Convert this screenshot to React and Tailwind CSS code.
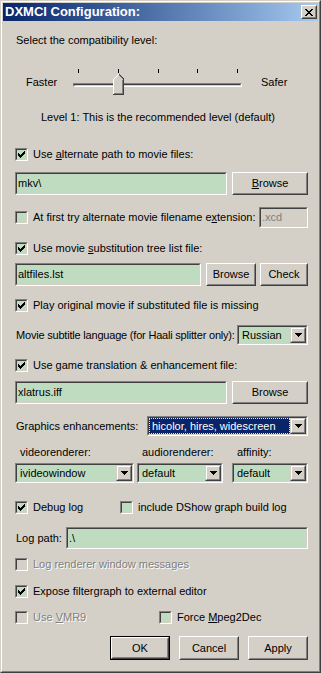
import React from "react";

const sunkenOuter = "border border-t-[#808080] border-l-[#808080] border-b-white border-r-white";
const sunkenInner = "border border-t-[#404040] border-l-[#404040] border-b-[#d4d0c8] border-r-[#d4d0c8]";
const raisedOuter = "border border-t-white border-l-white border-b-[#404040] border-r-[#404040]";
const raisedInner = "border border-t-[#d4d0c8] border-l-[#d4d0c8] border-b-[#808080] border-r-[#808080]";
const disabledText = "text-[#808080] [text-shadow:1px_1px_0_#ffffff]";

function Sunken({ className = "", bg = "bg-[#c0dcc0]", children }) {
  return (
    <div className={`${sunkenOuter} ${className}`}>
      <div className={`flex h-full items-center ${sunkenInner} ${bg}`}>{children}</div>
    </div>
  );
}

function Button({ children, className = "", isDefault = false }) {
  const face = (
    <div className={`flex h-full w-full ${raisedOuter}`}>
      <div className={`flex flex-1 items-center justify-center bg-[#d4d0c8] ${raisedInner}`}>
        {children}
      </div>
    </div>
  );
  if (isDefault) {
    return <div className={`border border-black ${className}`}>{face}</div>;
  }
  return <div className={`shrink-0 ${className}`}>{face}</div>;
}

function CheckMark() {
  return (
    <svg width="7" height="7" viewBox="0 0 7 7" shapeRendering="crispEdges">
      <path
        fill="#000"
        d="M6 0h1v1h-1z M5 1h2v1h-2z M0 2h1v1h-1z M4 2h3v1h-3z M0 3h2v1h-2z M3 3h3v1h-3z M0 4h5v1h-5z M1 5h3v1h-3z M2 6h1v1h-1z"
      />
    </svg>
  );
}

function CheckBox({ checked, disabled }) {
  return (
    <div className={`h-[13px] w-[13px] shrink-0 ${sunkenOuter}`}>
      <div
        className={`flex h-full w-full items-center justify-center ${sunkenInner} ${
          disabled ? "bg-[#d4d0c8]" : "bg-[#c0dcc0]"
        }`}
      >
        {checked && <CheckMark />}
      </div>
    </div>
  );
}

function CheckRow({ checked = false, disabled = false, className = "", children }) {
  return (
    <div className={`flex h-[13px] items-center ${className}`}>
      <CheckBox checked={checked} disabled={disabled} />
      <span className={`ml-[5px] whitespace-nowrap ${disabled ? disabledText : ""}`}>{children}</span>
    </div>
  );
}

function DropButton() {
  return (
    <div className="flex h-full w-[16px] shrink-0 border border-t-[#d4d0c8] border-l-[#d4d0c8] border-b-[#404040] border-r-[#404040]">
      <div className="flex flex-1 items-center justify-center border border-t-white border-l-white border-b-[#808080] border-r-[#808080] bg-[#d4d0c8]">
        <svg width="7" height="4" viewBox="0 0 7 4" shapeRendering="crispEdges">
          <path fill="#000" d="M0 0h7v1h-7z M1 1h5v1h-5z M2 2h3v1h-3z M3 3h1v1h-1z" />
        </svg>
      </div>
    </div>
  );
}

function Combo({ value, className = "", selected = false }) {
  return (
    <Sunken className={`h-[20px] shrink-0 ${className}`}>
      {selected ? (
        <div className="flex h-full flex-1 items-center border border-dotted border-[#f0f080] bg-[#0a246a] pl-[2px] text-white">
          {value}
        </div>
      ) : (
        <div className="flex-1 pl-[3px]">{value}</div>
      )}
      <DropButton />
    </Sunken>
  );
}

function Edit({ value, className = "" }) {
  return (
    <Sunken className={`h-[23px] shrink-0 ${className}`}>
      <span className="pl-[1px]">{value}</span>
    </Sunken>
  );
}

function Slider() {
  return (
    <div className="mt-[21px] flex h-[28px] items-center">
      <div className="w-[58px] pl-[11px]">Faster</div>
      <div className="relative h-full w-[169px]">
        <div className="flex justify-between pl-[5px] pr-[4px] pt-[1px]">
          {[0, 1, 2, 3, 4].map((i) => (
            <div key={i} className="h-[4px] w-[1px] bg-black" />
          ))}
        </div>
        <div className={`mt-[10px] h-[4px] ${sunkenOuter}`}>
          <div className={`h-full ${sunkenInner}`} />
        </div>
        <svg
          className="absolute left-[40px] top-[6px]"
          width="11"
          height="21"
          viewBox="0 0 11 21"
          shapeRendering="crispEdges"
        >
          <path fill="#d4d0c8" d="M0 5L5 0L6 0L11 5V21H0Z" />
          <path fill="#fff" d="M0 5h1v15h-1z M1 4h1v1h-1z M2 3h1v1h-1z M3 2h1v1h-1z M4 1h1v1h-1z M5 0h1v1h-1z" />
          <path fill="#808080" d="M9 6h1v13h-1z M1 19h9v1h-9z M6 1h1v1h-1z M7 2h1v1h-1z M8 3h1v1h-1z M9 4h1v1h-1z" />
          <path fill="#404040" d="M10 5h1v16h-1z M0 20h11v1h-11z M6 0h1v1h-1z M7 1h1v1h-1z M8 2h1v1h-1z M9 3h1v1h-1z M10 4h1v1h-1z" />
        </svg>
      </div>
      <div className="pl-[19px]">Safer</div>
    </div>
  );
}

export default function App() {
  return (
    <div className="h-[673px] w-[321px] bg-[#d4d0c8] font-['Liberation_Sans',Arial,sans-serif] text-[11px] leading-[13px] text-black">
      <div className="h-full border border-t-[#d4d0c8] border-l-[#d4d0c8] border-b-[#404040] border-r-[#404040]">
        <div className="flex h-full flex-col border border-t-white border-l-white border-b-[#808080] border-r-[#808080] p-[1px]">
          {/* title bar */}
          <div className="flex h-[18px] shrink-0 items-center justify-between bg-linear-to-r from-[#0a246a] to-[#a6caf0] pl-[2px] pr-[1px]">
            <span className="text-[13px] font-bold leading-[16px] text-white">DXMCI Configuration:</span>
            <Button className="h-[14px] w-[16px]">
              <svg width="8" height="7" viewBox="0 0 8 7" shapeRendering="crispEdges">
                <path
                  fill="#000"
                  d="M0 0h2v1h-2z M6 0h2v1h-2z M1 1h2v1h-2z M5 1h2v1h-2z M2 2h4v1h-4z M3 3h2v1h-2z M2 4h4v1h-4z M1 5h2v1h-2z M5 5h2v1h-2z M0 6h2v1h-2z M6 6h2v1h-2z"
                />
              </svg>
            </Button>
          </div>

          {/* client area */}
          <div className="flex flex-col pl-[12px] pr-[10px] pt-[13px]">
            <div className="h-[13px] pl-[1px]">Select the compatibility level:</div>

            <Slider />

            <div className="mt-[15px] h-[13px] pl-[26px]">Level 1: This is the recommended level (default)</div>

            <CheckRow checked className="mt-[24px]">
              Use <u>a</u>lternate path to movie files:
            </CheckRow>

            <div className="mt-[11px] flex gap-[5px]">
              <Edit value={"mkv\\"} className="w-[212px]" />
              <Button className="h-[23px] w-[76px]">
                <span>
                  <u>B</u>rowse
                </span>
              </Button>
            </div>

            <div className="mt-[12px] flex h-[21px] items-center justify-between">
              <CheckRow>
                At first try alternate movie filename e<u>x</u>tension:
              </CheckRow>
              <Sunken className="h-[21px] w-[49px]" bg="bg-[#d4d0c8]">
                <span className="pl-[1px] text-[#808080]">.xcd</span>
              </Sunken>
            </div>

            <CheckRow checked className="mt-[14px]">
              Use movie <u>s</u>ubstitution tree list file:
            </CheckRow>

            <div className="mt-[8px] flex">
              <Edit value="altfiles.lst" className="w-[186px]" />
              <Button className="ml-[5px] h-[23px] w-[50px]">Browse</Button>
              <Button className="ml-[4px] h-[23px] w-[48px]">Check</Button>
            </div>

            <CheckRow checked className="mt-[13px]">
              Play original movie if substituted file is missing
            </CheckRow>

            <div className="mt-[13px] flex h-[20px] items-center justify-between">
              <span className="whitespace-nowrap pl-[1px] tracking-[-0.2px]">
                Movie subtitle language (for Haali splitter only):
              </span>
              <Combo value="Russian" className="w-[71px]" />
            </div>

            <CheckRow checked className="mt-[14px]">
              Use game translation &amp; enhancement file:
            </CheckRow>

            <div className="mt-[9px] flex gap-[5px]">
              <Edit value="xlatrus.iff" className="w-[212px]" />
              <Button className="h-[23px] w-[76px]">Browse</Button>
            </div>

            <div className="mt-[12px] flex h-[20px] items-center justify-between">
              <span className="pl-[1px]">Graphics enhancements:</span>
              <Combo value="hicolor, hires, widescreen" className="w-[161px]" selected />
            </div>

            <div className="mt-[10px] flex">
              <div className="w-[119px]">
                <div className="h-[13px] pl-[5px]">videorenderer:</div>
                <Combo value="ivideowindow" className="mt-[4px] w-full" />
              </div>
              <div className="ml-[3px] w-[86px]">
                <div className="h-[13px] pl-[5px]">audiorenderer:</div>
                <Combo value="default" className="mt-[4px] w-full" />
              </div>
              <div className="ml-[9px] w-[76px]">
                <div className="h-[13px] pl-[5px]">affinity:</div>
                <Combo value="default" className="mt-[4px] w-full" />
              </div>
            </div>

            <div className="mt-[18px] flex">
              <CheckRow checked className="w-[105px]">
                Debug log
              </CheckRow>
              <CheckRow>include DShow graph build log</CheckRow>
            </div>

            <div className="mt-[13px] flex h-[22px] items-center justify-between">
              <span className="pl-[1px]">Log path:</span>
              <Sunken className="h-[22px] w-[242px]">
                <span className="pl-[1px]">{".\\"}</span>
              </Sunken>
            </div>

            <CheckRow disabled className="mt-[9px]">
              Log renderer window messages
            </CheckRow>

            <CheckRow checked className="mt-[14px]">
              Expose filtergraph to external editor
            </CheckRow>

            <div className="mt-[13px] flex">
              <CheckRow disabled className="w-[144px]">
                Use <u>V</u>MR9
              </CheckRow>
              <CheckRow>
                Force <u>M</u>peg2Dec
              </CheckRow>
            </div>

            <div className="mt-[12px] flex justify-end gap-[9px]">
              <Button isDefault className="h-[24px] w-[60px]">OK</Button>
              <Button className="h-[24px] w-[60px]">Cancel</Button>
              <Button className="h-[24px] w-[60px]">Apply</Button>
            </div>
          </div>
        </div>
      </div>
    </div>
  );
}
